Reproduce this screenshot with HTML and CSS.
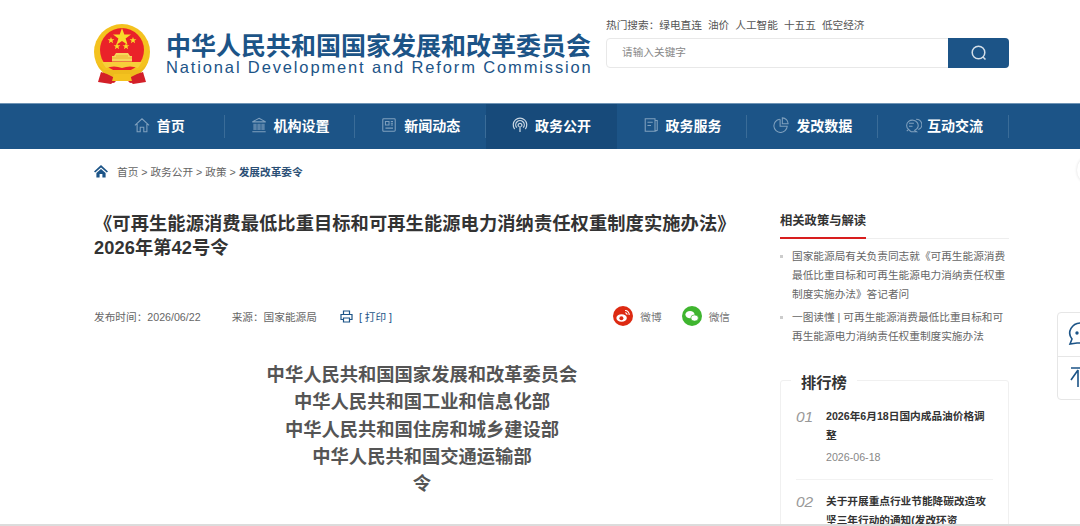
FILE: index.html
```html
<!DOCTYPE html>
<html lang="zh-CN">
<head>
  <meta charset="UTF-8">
  <title>国家发展和改革委员会</title>
  <link rel="stylesheet" href="styles.css">
</head>
<body>
  <header class="top">
    <div class="wrap top-inner">
      <div class="logo">
        <svg class="emblem" width="58" height="62" viewBox="0 0 58 62">
          <path d="M10 46 L8 58 L20 61 L24 57 H32 L36 61 L48 58 L46 46Z" fill="#d8202a"/>
          <circle cx="28" cy="30" r="28" fill="#f4c21f"/>
          <circle cx="28" cy="28" r="22" fill="#ea2229"/>
          <path d="M3 42 Q8 52 20 55 H36 Q48 52 53 42 L46 48 H10Z" fill="#eebb1c"/>
          <path d="M7 50 L4 60 L17 62 L23 57 L13 52Z" fill="#d31f28"/>
          <path d="M49 50 L52 60 L39 62 L33 57 L43 52Z" fill="#d31f28"/>
          <path d="M20 52 H36 L38 59 H18Z" fill="#f4c21f"/>
          <path d="M8 40 H48 L44 46 Q36 43 28 46 Q20 43 12 46Z" fill="#f7cf3a"/>
          <path d="M22 31 H34 L36 34 H38 V39.5 H18 V34 H20Z" fill="#f6d65a"/>
          <path d="M18 36 H38 M22 34 H34" stroke="#e8a020" stroke-width=".7"/>
          <path d="M28 6 L30.3 12.4 H37 L31.6 16.4 L33.6 22.8 L28 19 L22.4 22.8 L24.4 16.4 L19 12.4 H25.7Z" fill="#f8dc2a"/>
          <path id="s" d="M17 15 L17.9 17.3 H20.4 L18.4 18.8 L19.1 21.2 L17 19.8 L14.9 21.2 L15.6 18.8 L13.6 17.3 H16.1Z" fill="#f8dc2a"/>
          <use href="#s" x="22"/>
          <use href="#s" x="6" y="6"/>
          <use href="#s" x="15" y="6"/>
        </svg>
        <div class="logo-text">
          <div class="logo-cn">中华人民共和国国家发展和改革委员会</div>
          <div class="logo-en">National Development and Reform Commission</div>
        </div>
      </div>
      <div class="search">
        <div class="hot">
          <span>热门搜索：</span><span>绿电直连</span><span>油价</span><span>人工智能</span><span>十五五</span><span>低空经济</span>
        </div>
        <div class="search-box">
          <div class="search-input">请输入关键字</div>
          <div class="search-btn">
            <svg width="18" height="18" viewBox="0 0 18 18" fill="none" stroke="#d4dfe9" stroke-width="1.5">
              <circle cx="8.5" cy="8.5" r="6.3"/>
              <path d="M13 13 L15.5 15.5"/>
            </svg>
          </div>
        </div>
      </div>
    </div>
  </header>

  <nav class="nav">
    <div class="wrap nav-inner">
      <a class="nav-item">
        <svg viewBox="0 0 18 18" class="nav-icon"><path d="M1 9.5 L9 2 L17 9.5 M3.5 8 V16.5 H7 V11.5 H11 V16.5 H14.5 V8"/></svg>首页
      </a>
      <a class="nav-item">
        <svg viewBox="0 0 18 18" class="nav-icon"><path d="M9 1.5 L16.5 5.5 H1.5Z M3.5 7.5 V14.5 M5.5 7.5 V14.5 M8 7.5 V14.5 M10 7.5 V14.5 M12.5 7.5 V14.5 M14.5 7.5 V14.5 M1.5 16.5 H16.5"/></svg>机构设置
      </a>
      <a class="nav-item">
        <svg viewBox="0 0 18 18" class="nav-icon"><path d="M3 2 H15 Q16 2 16 3 V15 Q16 16 15 16 H3 Q2 16 2 15 V3 Q2 2 3 2Z M5 5 H9 V9 H5Z M11 5 H13.5 M11 7 H13.5 M11 9 H13.5 M5 12.5 H13.5"/></svg>新闻动态
      </a>
      <a class="nav-item active">
        <svg viewBox="0 0 18 18" class="nav-icon light"><path d="M3 13.5 A7.6 7.6 0 1 1 15 13.5 M5.4 12 A4.8 4.8 0 1 1 12.6 12 M7.6 10.8 A2.1 2.1 0 1 1 10.4 10.8 M9 10 V17"/></svg>政务公开
      </a>
      <a class="nav-item">
        <svg viewBox="0 0 18 18" class="nav-icon"><path d="M2.5 2 H13.5 V16 H2.5Z M13.5 4 H16 V15 L13.5 16 M5 6 H11 M5 9.5 H9"/></svg>政务服务
      </a>
      <a class="nav-item">
        <svg viewBox="0 0 18 18" class="nav-icon"><path d="M7.5 2.5 A7.5 7.5 0 1 0 16 10.5 H8 V2.5 M10.5 1 A6.5 6.5 0 0 1 17 7.5 H10.5Z"/></svg>发改数据
      </a>
      <a class="nav-item wide">
        <svg viewBox="0 0 20 18" class="nav-icon"><path d="M5 14 A6.5 6 0 1 1 12 15 L14 16.5 H8 Q6.5 16 5 14 L3 16 M5.5 7 H11 M5.5 10.5 H9.5 M13.5 2.5 A6.5 6 0 0 1 16 14"/></svg>互动交流
      </a>
    </div>
  </nav>

  <div class="wrap crumb">
    <svg width="14" height="14" viewBox="0 0 14 14" fill="#1c5487"><path d="M7 1 L14 7.4 L12.8 8.6 L7 3.4 L1.2 8.6 L0 7.4Z M2.4 9 L7 4.9 L11.6 9 V13.4 H8.4 V10 H5.6 V13.4 H2.4Z"/></svg>
    <span class="crumb-links">首页 &gt; 政务公开 &gt; 政策 &gt; <b>发展改革委令</b></span>
  </div>

  <div class="wrap main">
    <article class="article">
      <h1>《可再生能源消费最低比重目标和可再生能源电力消纳责任权重制度实施办法》2026年第42号令</h1>
      <div class="meta">
        <span class="meta-date">发布时间：2026/06/22</span>
        <span class="meta-src">来源：国家能源局</span>
        <span class="meta-print">
          <svg width="13" height="13" viewBox="0 0 13 13" fill="none" stroke="#1c5487" stroke-width="1.2"><path d="M3.5 4.5 V1 H9.5 V4.5 M3 9.5 H1 V4.5 H12 V9.5 H10 M3.5 8 H9.5 V12 H3.5Z"/></svg>
          [ 打印 ]
        </span>
        <span class="share">
          <span class="share-item">
            <svg class="share-icon" viewBox="0 0 20 20"><circle cx="10" cy="10" r="10" fill="#dd2a12"/><ellipse cx="8.6" cy="12" rx="5.2" ry="3.8" fill="#fff"/><circle cx="8.4" cy="12.2" r="2" fill="#dd2a12"/><path d="M12 4.5 A4 4 0 0 1 16.2 9 M12.2 6.8 A1.8 1.8 0 0 1 14 8.8" fill="none" stroke="#fff" stroke-width="1.1"/></svg>
            微博
          </span>
          <span class="share-item">
            <svg class="share-icon" viewBox="0 0 20 20"><circle cx="10" cy="10" r="10" fill="#3fb52f"/><ellipse cx="8" cy="8.6" rx="4.6" ry="3.7" fill="#fff"/><ellipse cx="12.6" cy="12" rx="3.8" ry="3.1" fill="#fff" stroke="#3fb52f" stroke-width=".7"/></svg>
            微信
          </span>
        </span>
      </div>
      <div class="doc-head">
        <p>中华人民共和国国家发展和改革委员会</p>
        <p>中华人民共和国工业和信息化部</p>
        <p>中华人民共和国住房和城乡建设部</p>
        <p>中华人民共和国交通运输部</p>
        <p>令</p>
      </div>
    </article>

    <aside class="side">
      <div class="side-title"><span>相关政策与解读</span></div>
      <ul class="related">
        <li>国家能源局有关负责同志就《可再生能源消费最低比重目标和可再生能源电力消纳责任权重制度实施办法》答记者问</li>
        <li>一图读懂 | 可再生能源消费最低比重目标和可再生能源电力消纳责任权重制度实施办法</li>
      </ul>
      <section class="rank">
        <h3>排行榜</h3>
        <div class="rank-item">
          <div class="rank-no">01</div>
          <div class="rank-body">
            <div class="rank-title">2026年6月18日国内成品油价格调整</div>
            <div class="rank-date">2026-06-18</div>
          </div>
        </div>
        <div class="rank-item">
          <div class="rank-no">02</div>
          <div class="rank-body">
            <div class="rank-title">关于开展重点行业节能降碳改造攻坚三年行动的通知(发改环资</div>
          </div>
        </div>
      </section>
    </aside>
  </div>

  <div class="round-btn"></div>
  <div class="float-tools">
    <div class="tool">
      <svg width="26" height="26" viewBox="0 0 26 26" fill="none" stroke="#1c5487" stroke-width="1.6"><path d="M13 2 A11 10 0 0 1 13 22 H9 L2 23 L4 18 A11 10 0 0 1 13 2Z"/><circle cx="9" cy="12" r=".9" fill="#1c5487"/><circle cx="14" cy="12" r=".9" fill="#1c5487"/></svg>
    </div>
    <div class="tool">
      <svg width="26" height="26" viewBox="0 0 26 26" fill="none" stroke="#1c5487" stroke-width="1.6"><path d="M3 3 H20 M10 5 L3 15 M10 5 V22"/></svg>
    </div>
  </div>
  <div class="bottom-line"></div>
</body>
</html>
```

FILE: styles.css
```css
* {
  box-sizing: border-box;
  margin: 0;
  padding: 0;
}

html, body {
  height: 526px;
  overflow: hidden;
}

body {
  font-family: "Liberation Sans", "Noto Sans CJK SC", sans-serif;
  background: #fff;
  color: #666;
  font-size: 10.67px;
  position: relative;
}

.wrap {
  width: 915px;
  margin-left: 94px;
}

/* header */
.top {
  height: 103px;
}

.top-inner {
  display: flex;
  justify-content: space-between;
}

.logo {
  display: flex;
  padding-top: 22px;
}

.emblem {
  flex: none;
}

.logo-text {
  margin-left: 14px;
  padding-top: 10px;
  color: #1c5487;
}

.logo-cn {
  font-size: 25px;
  line-height: 29px;
  font-weight: bold;
  white-space: nowrap;
}

.logo-en {
  margin-top: -3px;
  font-size: 16.5px;
  line-height: 18px;
  letter-spacing: 1.86px;
  white-space: nowrap;
}

.search {
  width: 403px;
  padding-top: 17px;
}

.hot {
  line-height: 16px;
  color: #555;
  white-space: nowrap;
}

.hot span {
  margin-right: 6px;
}

.hot span:first-child {
  margin-right: 0;
}

.search-box {
  display: flex;
  height: 30px;
  margin-top: 5px;
  border: 1px solid #e8e8e8;
  border-radius: 4px;
}

.search-input {
  flex: 1;
  padding-left: 15px;
  line-height: 27px;
  color: #888;
}

.search-btn {
  width: 61px;
  margin: -1px;
  background: #1c5487;
  border-radius: 0 4px 4px 0;
  display: flex;
  align-items: center;
  justify-content: center;
}

/* nav */
.nav {
  height: 46px;
  background: #1c5487;
  border-top: 1px solid #6f94b5;
}

.nav-inner {
  display: flex;
  height: 45px;
}

.nav-item {
  width: 130.7px;
  display: flex;
  align-items: center;
  justify-content: center;
  gap: 7px;
  padding-bottom: 3px;
  font-size: 14px;
  font-weight: bold;
  color: #fff;
  position: relative;
}

.nav-item::after {
  content: "";
  position: absolute;
  right: 0;
  top: 11px;
  height: 23px;
  width: 1px;
  background: #3a6c98;
}

.nav-item.active {
  background: #174a7a;
}

.nav-item.active::after {
  display: none;
}

.nav-icon {
  width: 16px;
  height: 16px;
  fill: none;
  stroke: #7fa0be;
  stroke-width: 1.2;
}

.nav-item.wide {
  gap: 5px;
}

.nav-item.wide .nav-icon {
  width: 18px;
}

.nav-icon.light {
  stroke: #c9d6e2;
  stroke-width: 1.4;
}

/* breadcrumb */
.crumb {
  display: flex;
  align-items: center;
  height: 44px;
}

.crumb-links {
  margin-left: 9px;
  color: #666;
}

.crumb-links b {
  color: #2b4f75;
}

/* main */
.main {
  display: flex;
  justify-content: space-between;
  height: 333px;
  padding-top: 19px;
  overflow: hidden;
}

.article {
  width: 656px;
}

.article h1 {
  font-size: 18.25px;
  line-height: 24px;
  letter-spacing: 0.08px;
  color: #333;
  width: 645px;
}

.meta {
  display: flex;
  align-items: center;
  height: 44px;
  margin-top: 36px;
  padding-bottom: 4px;
  color: #666;
}

.meta-src {
  margin-left: 31px;
}

.meta-print {
  display: flex;
  align-items: center;
  gap: 6px;
  margin-left: 23px;
  color: #1c5487;
}

.share {
  display: flex;
  gap: 20px;
  margin-left: auto;
  margin-right: 20px;
}

.share-item {
  display: flex;
  align-items: center;
  gap: 7px;
  color: #777;
}

.share-icon {
  width: 20px;
  height: 20px;
}

.doc-head {
  margin-top: 21px;
  text-align: center;
  font-size: 18.3px;
  line-height: 27.3px;
  font-weight: bold;
  color: #555;
}

/* side */
.side {
  width: 229px;
  flex: none;
}

.side-title {
  height: 27px;
  border-bottom: 1px solid #eee;
  font-size: 12.3px;
  font-weight: bold;
  color: #333;
  line-height: 19px;
}

.side-title span {
  display: inline-block;
  height: 27px;
  border-bottom: 2px solid #d81e1e;
}

.related {
  list-style: none;
  margin-top: 8px;
}

.related li {
  position: relative;
  padding-left: 12px;
  line-height: 19px;
  margin-bottom: 4px;
  color: #666;
}

.related li::before {
  content: "";
  position: absolute;
  left: 0;
  top: 8px;
  width: 3px;
  height: 3px;
  background: #ccc;
}

.rank {
  position: relative;
  margin-top: 34px;
  border: 1px solid #f0f0f0;
  border-radius: 3px;
  padding: 26px 15px 0;
  height: 200px;
}

.rank h3 {
  position: absolute;
  left: 10px;
  top: -8px;
  padding: 0 10px;
  background: #fff;
  font-size: 15.3px;
  line-height: 20px;
  color: #333;
}

.rank-item {
  display: flex;
  margin-bottom: 12px;
}

.rank-no {
  width: 30px;
  flex: none;
  font-size: 15.5px;
  line-height: 19px;
  font-style: italic;
  color: #999;
}

.rank-title {
  line-height: 19px;
  font-weight: bold;
  color: #333;
}

.rank-date {
  margin-top: 3px;
  padding-bottom: 12px;
  line-height: 19px;
  color: #888;
}

.rank-item:first-of-type {
  border-bottom: 1px solid #f2f2f2;
}

/* floating */
.round-btn {
  position: absolute;
  left: 1077px;
  top: 155px;
  width: 30px;
  height: 30px;
  border-radius: 50%;
  background: #fff;
  box-shadow: 0 0 3px #ddd;
}

.float-tools {
  position: absolute;
  left: 1057px;
  top: 312px;
  width: 60px;
  height: 88px;
  background: #fff;
  border: 1px solid #e6e6e6;
  border-radius: 4px;
}

.tool {
  height: 43px;
  padding: 8px 0 0 10px;
}

.tool + .tool {
  border-top: 1px solid #e6e6e6;
}

.bottom-line {
  position: absolute;
  left: 0;
  right: 0;
  bottom: 0;
  height: 2px;
  background: #dcdcdc;
}
```
